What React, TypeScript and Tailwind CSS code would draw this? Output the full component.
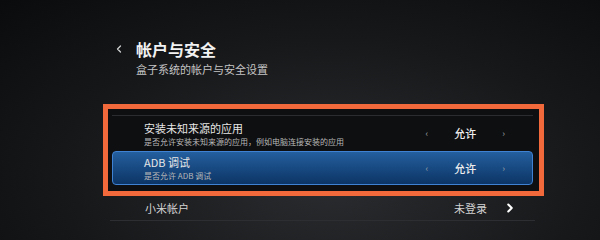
import { ChevronLeft, ChevronRight } from 'lucide-react'

const font = { fontFamily: '"Noto Sans CJK SC", "Noto Sans", sans-serif' }

function Arrow({ dir }: { dir: 'l' | 'r' }) {
  return (
    <span className="text-[9px] leading-none text-[#9aa0a6]">{dir === 'l' ? '‹' : '›'}</span>
  )
}

function OptionRow({
  title,
  desc,
  value,
  selected,
}: {
  title: string
  desc: string
  value: string
  selected?: boolean
}) {
  return (
    <div
      className={
        selected
          ? 'flex h-[34px] items-center rounded-[4px] border border-[#3f82d4] bg-gradient-to-b from-[#245f9e] to-[#0c3566] pl-[31px] pr-[27px]'
          : 'flex h-[36px] items-center border-t border-[#2a2c2f] pl-[32px] pr-[28px]'
      }
    >
      <div className="flex flex-1 flex-col">
        <span className="text-[11px] leading-[13px] text-[#e6e6e6]">{title}</span>
        <span className="mt-[2px] text-[8px] leading-[9px] text-[#b8b8b8]">{desc}</span>
      </div>
      <div className="flex items-center">
        <Arrow dir="l" />
        <span className="w-[74px] text-center text-[11px] font-medium text-[#eeeeee]">{value}</span>
        <Arrow dir="r" />
      </div>
    </div>
  )
}

export default function App() {
  return (
    <div
      className="h-[240px] w-[600px] overflow-hidden bg-[radial-gradient(ellipse_at_55%_75%,#2a2c2f_0%,#17181a_55%,#0a0b0c_100%)]"
      style={font}
    >
      <div className="ml-[113px] flex items-center pt-[40px]">
        <ChevronLeft className="h-[12px] w-[12px] text-[#d0d0d0]" strokeWidth={2.5} />
        <h1 className="ml-[11px] text-[16px] font-bold leading-[18px] text-[#f2f2f2]">帐户与安全</h1>
      </div>
      <p className="ml-[136px] mt-[5px] text-[11px] leading-[13px] text-[#c4c4c4]">盒子系统的帐户与安全设置</p>

      <div className="ml-[103px] mt-[28px] h-[92px] w-[441px] border-[5px] border-[#f26a3c] bg-[#0e0f10] pl-[4px] pr-[6px] pt-[6px]">
        <OptionRow title="安装未知来源的应用" desc="是否允许安装未知来源的应用，例如电脑连接安装的应用" value="允许" />
        <OptionRow title="ADB 调试" desc="是否允许 ADB 调试" value="允许" selected />
      </div>

      <div className="mx-[65px] ml-[110px] flex h-[25px] items-center border-b border-[#2c2e31] pl-[35px] pr-[18px]">
        <span className="flex-1 text-[11px] text-[#d2d2d2]">小米帐户</span>
        <span className="text-[11px] text-[#d2d2d2]">未登录</span>
        <ChevronRight className="ml-[16px] h-[14px] w-[14px] text-white" strokeWidth={3.5} />
      </div>
    </div>
  )
}
